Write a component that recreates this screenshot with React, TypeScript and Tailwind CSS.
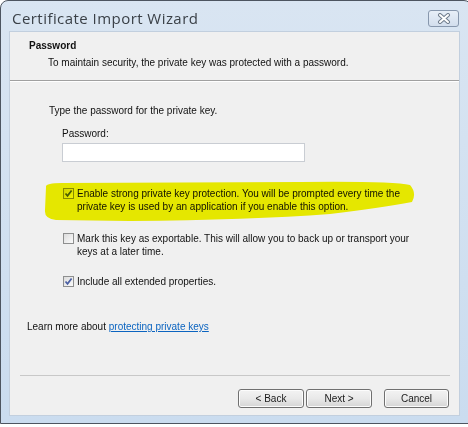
import { useState } from "react";

const ui = { fontFamily: '"Liberation Sans", Arial, sans-serif' };

function Checkbox({ checked }: { checked: boolean }) {
  return (
    <span className="mt-[1px] flex h-[11px] w-[11px] shrink-0 items-center justify-center border border-[#8e8f8f] bg-gradient-to-br from-[#dcdcdc] to-[#fbfbfb]">
      {checked && (
        <svg width="9" height="9" viewBox="0 0 9 9">
          <path d="M1.5 4.5 L3.5 6.8 L7.6 1.4" fill="none" stroke="#4b5fa3" strokeWidth="1.7" />
        </svg>
      )}
    </span>
  );
}

function WizardButton({ label }: { label: string }) {
  return (
    <button className="h-[19px] rounded-[3px] border border-[#707070] bg-gradient-to-b from-[#f3f3f3] via-[#e9e9e9] to-[#d5d5d5] text-[10px] leading-none text-[#1a1a1a] shadow-[inset_0_0_0_1px_#fcfcfc]">
      {label}
    </button>
  );
}

export default function App() {
  const [opts, setOpts] = useState({ strong: true, exportable: false, extended: true });
  const toggle = (k: keyof typeof opts) => setOpts((o) => ({ ...o, [k]: !o[k] }));

  return (
    <div className="relative h-[427px] w-[468px] overflow-hidden bg-white" style={ui}>
      <div className="flex h-[424px] w-[472px] flex-col rounded-t-[8px] border border-[#4d5560] bg-gradient-to-b from-[#d9e5f2] to-[#cadcef]">
        {/* title bar */}
        <div className="flex h-[30px] items-center justify-between pt-[4px] pl-[11px] pr-[12px]">
          <span className="text-[15px] leading-none tracking-[0.45px] text-[#3a4047]" style={{ fontFamily: '"Open Sans", "Liberation Sans", sans-serif' }}>
            Certificate Import Wizard
          </span>
          <span className="flex h-[17px] w-[31px] items-center justify-center rounded-[3px] border border-[#8797ad] bg-gradient-to-b from-[#e8eff8] to-[#d2deed]">
            <svg width="14" height="11" viewBox="0 0 14 11">
              <path d="M3 2 L11 9 M11 2 L3 9" stroke="#6f7c8c" strokeWidth="4" strokeLinecap="round" />
              <path d="M3 2 L11 9 M11 2 L3 9" stroke="#ffffff" strokeWidth="2" strokeLinecap="round" />
            </svg>
          </span>
        </div>

        {/* client area */}
        <div className="mb-[7px] ml-[8px] flex w-[451px] flex-1 flex-col border border-[#c2cfde] bg-[#f0f0f0] text-[10px] leading-[13px] text-[#111]">
          <div className="h-[49px] border-b border-[#a0a0a0] pt-[7px] pl-[19px]">
            <div className="font-bold">Password</div>
            <div className="mt-[4px] pl-[19px]">To maintain security, the private key was protected with a password.</div>
          </div>

          <div className="flex flex-1 flex-col border-t border-white pt-[22px] pl-[17px]">
            <div className="pl-[22px]">Type the password for the private key.</div>
            <div className="mt-[10px] pl-[35px]">Password:</div>
            <div className="mt-[3px] ml-[35px] h-[19px] w-[243px] border border-[#c9cdd3] bg-white" />

            <div className="mt-[25px] ml-[36px] flex flex-col gap-[19px]">
              <label className="flex items-start gap-[3px]" onClick={() => toggle("strong")}>
                <Checkbox checked={opts.strong} />
                <span>
                  Enable strong private key protection. You will be prompted every time the
                  <br />
                  private key is used by an application if you enable this option.
                </span>
              </label>
              <label className="flex items-start gap-[3px]" onClick={() => toggle("exportable")}>
                <Checkbox checked={opts.exportable} />
                <span>
                  Mark this key as exportable. This will allow you to back up or transport your
                  <br />
                  keys at a later time.
                </span>
              </label>
              <label className="-mt-[2px] flex items-start gap-[3px]" onClick={() => toggle("extended")}>
                <Checkbox checked={opts.extended} />
                <span>Include all extended properties.</span>
              </label>
            </div>

            <div className="mt-[32px]">
              Learn more about{" "}
              <a className="text-[#0b64c0] underline" href="#">
                protecting private keys
              </a>
            </div>
          </div>

          <div className="mr-[9px] ml-[10px] flex justify-end border-t border-[#c8c8c8] pt-[13px] pb-[7px]">
            <div className="mr-[1px] flex">
              <div className="grid grid-cols-[66px_66px] gap-[2px]">
                <WizardButton label="< Back" />
                <WizardButton label="Next >" />
              </div>
              <div className="ml-[12px] grid w-[65px]">
                <WizardButton label="Cancel" />
              </div>
            </div>
          </div>
        </div>
      </div>

      {/* yellow marker highlight */}
      <svg className="pointer-events-none absolute top-0 left-0 mix-blend-multiply" width="468" height="427">
        <path
          d="M46 187 Q45 183 62 183 L300 182 Q392 181 410 185 Q417 193 412 202 Q380 208 330 214 Q250 220 130 221 L56 220 Q44 219 45 210 Z"
          fill="#f4f600"
        />
      </svg>
    </div>
  );
}
